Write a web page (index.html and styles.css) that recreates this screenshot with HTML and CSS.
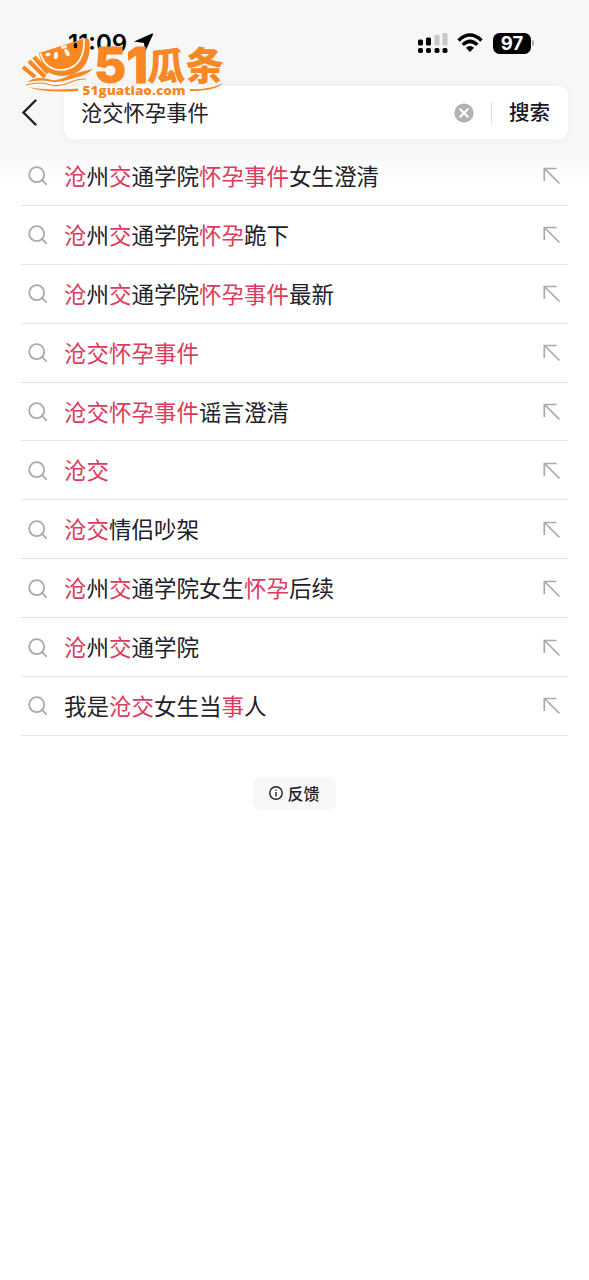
FILE: index.html
```html
<!DOCTYPE html>
<html lang="zh-CN">
<head>
<meta charset="utf-8">
<title>搜索</title>
<link rel="stylesheet" href="styles.css">
</head>
<body>
<svg class="defs" width="0" height="0" aria-hidden="true">
  <symbol id="search" viewBox="0 0 20 20"><circle cx="8.7" cy="8.7" r="7.5"/><path d="M14.2 14.2 18.2 18.2"/></symbol>
  <symbol id="fill" viewBox="0 0 18 18"><path d="M1.3 14V1.500H13.500M1.500 1.500 16.500 16.500"/></symbol>
</svg>
<header class="top">
  <div class="status">
    <span class="time">11:09</span>
    <svg class="location" width="20" height="20" viewBox="0 0 20 20"><path d="M0 8.500 18 .5Q19.500 0 19 1.500L11 19 10 10Z"/></svg>
    <div class="indicators">
      <svg width="30" height="21" viewBox="0 0 30 21">
        <g fill="#c8c8c8"><rect x="16.500" y="2" width="5" height="10.500" rx="1.200"/><rect x="24.500" y="0" width="5" height="12.500" rx="1.200"/></g>
        <rect x="0" y="6.500" width="5" height="6" rx="1.500"/><rect x="8" y="4.500" width="5" height="8" rx="1.500"/>
        <rect x="0" y="15" width="5" height="5" rx="1.800"/><rect x="8" y="15" width="5" height="5" rx="1.800"/><rect x="16.500" y="15" width="5" height="5" rx="1.800"/><rect x="24.500" y="15" width="5" height="5" rx="1.800"/>
      </svg>
      <svg class="wifi" width="26" height="20" viewBox="0 0 26 20"><g fill="none" stroke="#000" stroke-width="3.400"><path d="M1.500 7.400Q13-3.400 24.500 7.400"/><path d="M5.700 11.700Q13 5 20.300 11.700"/></g><path d="M8.900 14.800Q13 11.400 17.100 14.800L13 19Z"/></svg>
      <span class="battery">97</span><i class="battery-tip"></i>
    </div>
  </div>
  <div class="search-row">
    <svg class="back" width="16" height="27" viewBox="0 0 16 27"><path d="M14.500 1.500 2.500 13.500 14.500 25.500"/></svg>
    <div class="search-box">
      <span class="query">沧交怀孕事件</span>
      <svg class="clear" width="20" height="20" viewBox="0 0 20 20"><circle cx="10" cy="10" r="9.600"/><path d="M6.200 6.200 13.800 13.800M13.800 6.200 6.200 13.800"/></svg>
      <i class="divider"></i>
      <span class="submit">搜索</span>
    </div>
  </div>
</header>
<main>
  <ul class="suggestions">
    <li><svg class="glass"><use href="#search"/></svg><span><b>沧</b>州<b>交</b>通学院<b>怀孕事件</b>女生澄清</span><svg class="arrow"><use href="#fill"/></svg></li>
    <li><svg class="glass"><use href="#search"/></svg><span><b>沧</b>州<b>交</b>通学院<b>怀孕</b>跪下</span><svg class="arrow"><use href="#fill"/></svg></li>
    <li><svg class="glass"><use href="#search"/></svg><span><b>沧</b>州<b>交</b>通学院<b>怀孕事件</b>最新</span><svg class="arrow"><use href="#fill"/></svg></li>
    <li><svg class="glass"><use href="#search"/></svg><span><b>沧交怀孕事件</b></span><svg class="arrow"><use href="#fill"/></svg></li>
    <li><svg class="glass"><use href="#search"/></svg><span><b>沧交怀孕事件</b>谣言澄清</span><svg class="arrow"><use href="#fill"/></svg></li>
    <li><svg class="glass"><use href="#search"/></svg><span><b>沧交</b></span><svg class="arrow"><use href="#fill"/></svg></li>
    <li><svg class="glass"><use href="#search"/></svg><span><b>沧交</b>情侣吵架</span><svg class="arrow"><use href="#fill"/></svg></li>
    <li><svg class="glass"><use href="#search"/></svg><span><b>沧</b>州<b>交</b>通学院女生<b>怀孕</b>后续</span><svg class="arrow"><use href="#fill"/></svg></li>
    <li><svg class="glass"><use href="#search"/></svg><span><b>沧</b>州<b>交</b>通学院</span><svg class="arrow"><use href="#fill"/></svg></li>
    <li><svg class="glass"><use href="#search"/></svg><span>我是<b>沧交</b>女生当<b>事</b>人</span><svg class="arrow"><use href="#fill"/></svg></li>
  </ul>
  <div class="feedback">
    <svg width="14" height="14" viewBox="0 0 14 14"><circle cx="7" cy="7" r="6.200"/><path d="M7 6V10.500M7 3.400V4.800"/></svg>
    <span>反馈</span>
  </div>
</main>
<svg class="watermark" width="240" height="70" viewBox="0 30 240 70">
  <!-- watermelon slice -->
  <path class="o" d="M39 53 86 38Q89 37.500 89.500 43C91 58 85 69 74 74Q60 79 48 72Q41 66 39 53Z"/>
  <path class="w" d="M40.500 53.500C44 66 53 71 65 69.500C78 67.500 85 56 84 38.500"/>
  <g class="seed"><ellipse cx="48" cy="54.500" rx="2.800" ry="1.700" transform="rotate(-15 48 54.500)"/><ellipse cx="56" cy="55.500" rx="2.100" ry="3.800" transform="rotate(8 56 55.500)"/><ellipse cx="67" cy="52.500" rx="2" ry="4" transform="rotate(-28 67 52.500)"/><ellipse cx="64" cy="47" rx="3.200" ry="1.500" transform="rotate(-15 64 47)"/></g>
  <ellipse cx="75.500" cy="45.500" rx="1.800" ry="2.800"/>
  <!-- rind strips -->
  <path class="strip" d="M34 57 48 73M29 61 45 77M23 67 35 77"/>
  <!-- waves and underline -->
  <path class="o" d="M27 82Q36 76 48 79Q56 82 66 77Q77 72 93 69Q87 75 74 78Q62 82 54 82Q42 79 27 82Z"/>
  <path class="line" d="M26 85Q40 81 51 85Q61 87 71 82Q77 79 86 79"/>
  <path class="o" d="M28 87Q46 91 78 88.500V91Q44 93 28 87ZM190 89Q210 90 223 83Q216 91 190 91Z"/>
  <text class="big" x="94" y="83" textLength="54" lengthAdjust="spacingAndGlyphs">51</text>
  <text class="cn" x="147" y="80">瓜条</text>
  <path class="o" d="m171 69 1.600 3.400 3.800.4-2.800 2.500.8 3.700-3.400-1.800-3.400 1.800.8-3.700-2.800-2.500 3.800-.4Z"/>
  <text class="url" x="82.500" y="95" textLength="103" lengthAdjust="spacingAndGlyphs">51guatiao.com</text>
</svg>
</body>
</html>
```
FILE: styles.css
```css
* { box-sizing: border-box; }
body {
  position: relative;
  margin: 0;
  min-height: 1280px;
  background: #fff;
  color: #20202a;
  font-family: "Liberation Sans", "Noto Sans CJK SC", sans-serif;
}
.defs { position: absolute; }
.top {
  height: 147px;
  padding: 0 21px;
  background: #f7f7f7;
}
.status {
  display: flex;
  align-items: flex-start;
  height: 86px;
  padding: 32px 34px 0 47px;
  color: #000;
}
.time {
  width: 63px;
  font: 600 24px/24px Inter, sans-serif;
}
.location { margin: 1px 0 0 3px; }
.indicators {
  display: flex;
  align-items: center;
  height: 22px;
  margin-left: auto;
}
.wifi { margin-left: 9px; }
.battery {
  width: 38px;
  height: 21px;
  margin-left: 10px;
  border-radius: 6.5px;
  background: #000;
  color: #fff;
  font: 700 18.5px/21px Inter, sans-serif;
  text-align: center;
}
.battery-tip {
  width: 2px;
  height: 6px;
  margin-left: 1px;
  border-radius: 0 2px 2px 0;
  background: #aaa;
}
.search-row { display: flex; align-items: center; height: 53px; }
.back { fill: none; stroke: #20202a; stroke-width: 2.4; stroke-linecap: round; }
.search-box {
  display: flex;
  align-items: center;
  width: 504px;
  height: 53px;
  margin-left: 27px;
  padding: 0 18px 0 17px;
  border-radius: 9px;
  background: #fff;
  box-shadow: 0 0 10px #eee;
}
.query { flex: 1; padding-top: 2px; font-size: 21.3px; line-height: 32px; }
.clear { fill: #b1b1b1; stroke: #fff; stroke-width: 2; stroke-linecap: round; }
.clear circle { stroke: none; }
.divider { width: 1px; height: 22px; margin: 0 17px; background: #e0e0e0; }
.submit { padding-top: 1px; font-size: 20.5px; font-weight: 500; line-height: 32px; color: #161622; }
main {
  padding: 0 21px;
  background: linear-gradient(#f7f7f7, #fff 36px);
}
.suggestions { margin: 0; padding: 0; list-style: none; }
.suggestions li {
  display: flex;
  align-items: center;
  height: 58.9px;
  padding: 1px 7px 0;
  border-bottom: 1px solid #e4e4e4;
  font-size: 22.5px;
  line-height: 34px;
}
.suggestions span { padding-top: 3px; }
.suggestions b { color: #dc3b60; font-weight: 400; }
.glass {
  width: 20px;
  height: 20px;
  margin-right: 16px;
  fill: none;
  stroke: #aaa;
  stroke-width: 1.8;
  stroke-linecap: round;
}
.arrow {
  width: 18px;
  height: 18px;
  margin-left: auto;
  fill: none;
  stroke: #aaa;
  stroke-width: 1.7;
}
.feedback {
  display: flex;
  align-items: center;
  justify-content: center;
  gap: 4px;
  width: 83px;
  height: 33px;
  margin: 41px auto 0;
  border-radius: 8px;
  background: #f8f8f8;
  font-size: 16px;
  font-weight: 500;
}
.feedback svg { fill: none; stroke: #20202a; stroke-width: 1.4; }
.watermark { position: absolute; left: 0; top: 30px; overflow: visible; }
.watermark .o, .watermark text { fill: #f98722; }
.watermark .w { fill: none; stroke: #fff8ef; stroke-width: 1.8; }
.watermark .strip { fill: none; stroke: #f98722; stroke-width: 4.2; }
.watermark .seed { fill: #fff8ef; }
.watermark .line { fill: none; stroke: #f98722; stroke-width: 1.2; }
.big { font: 800 50px Inter, sans-serif; stroke: #f98722; stroke-width: 1; stroke-linejoin: round; }
.cn { font: 900 38.5px "Noto Sans CJK SC", sans-serif; }
.url { font: 800 13px "Open Sans", sans-serif; }
```
